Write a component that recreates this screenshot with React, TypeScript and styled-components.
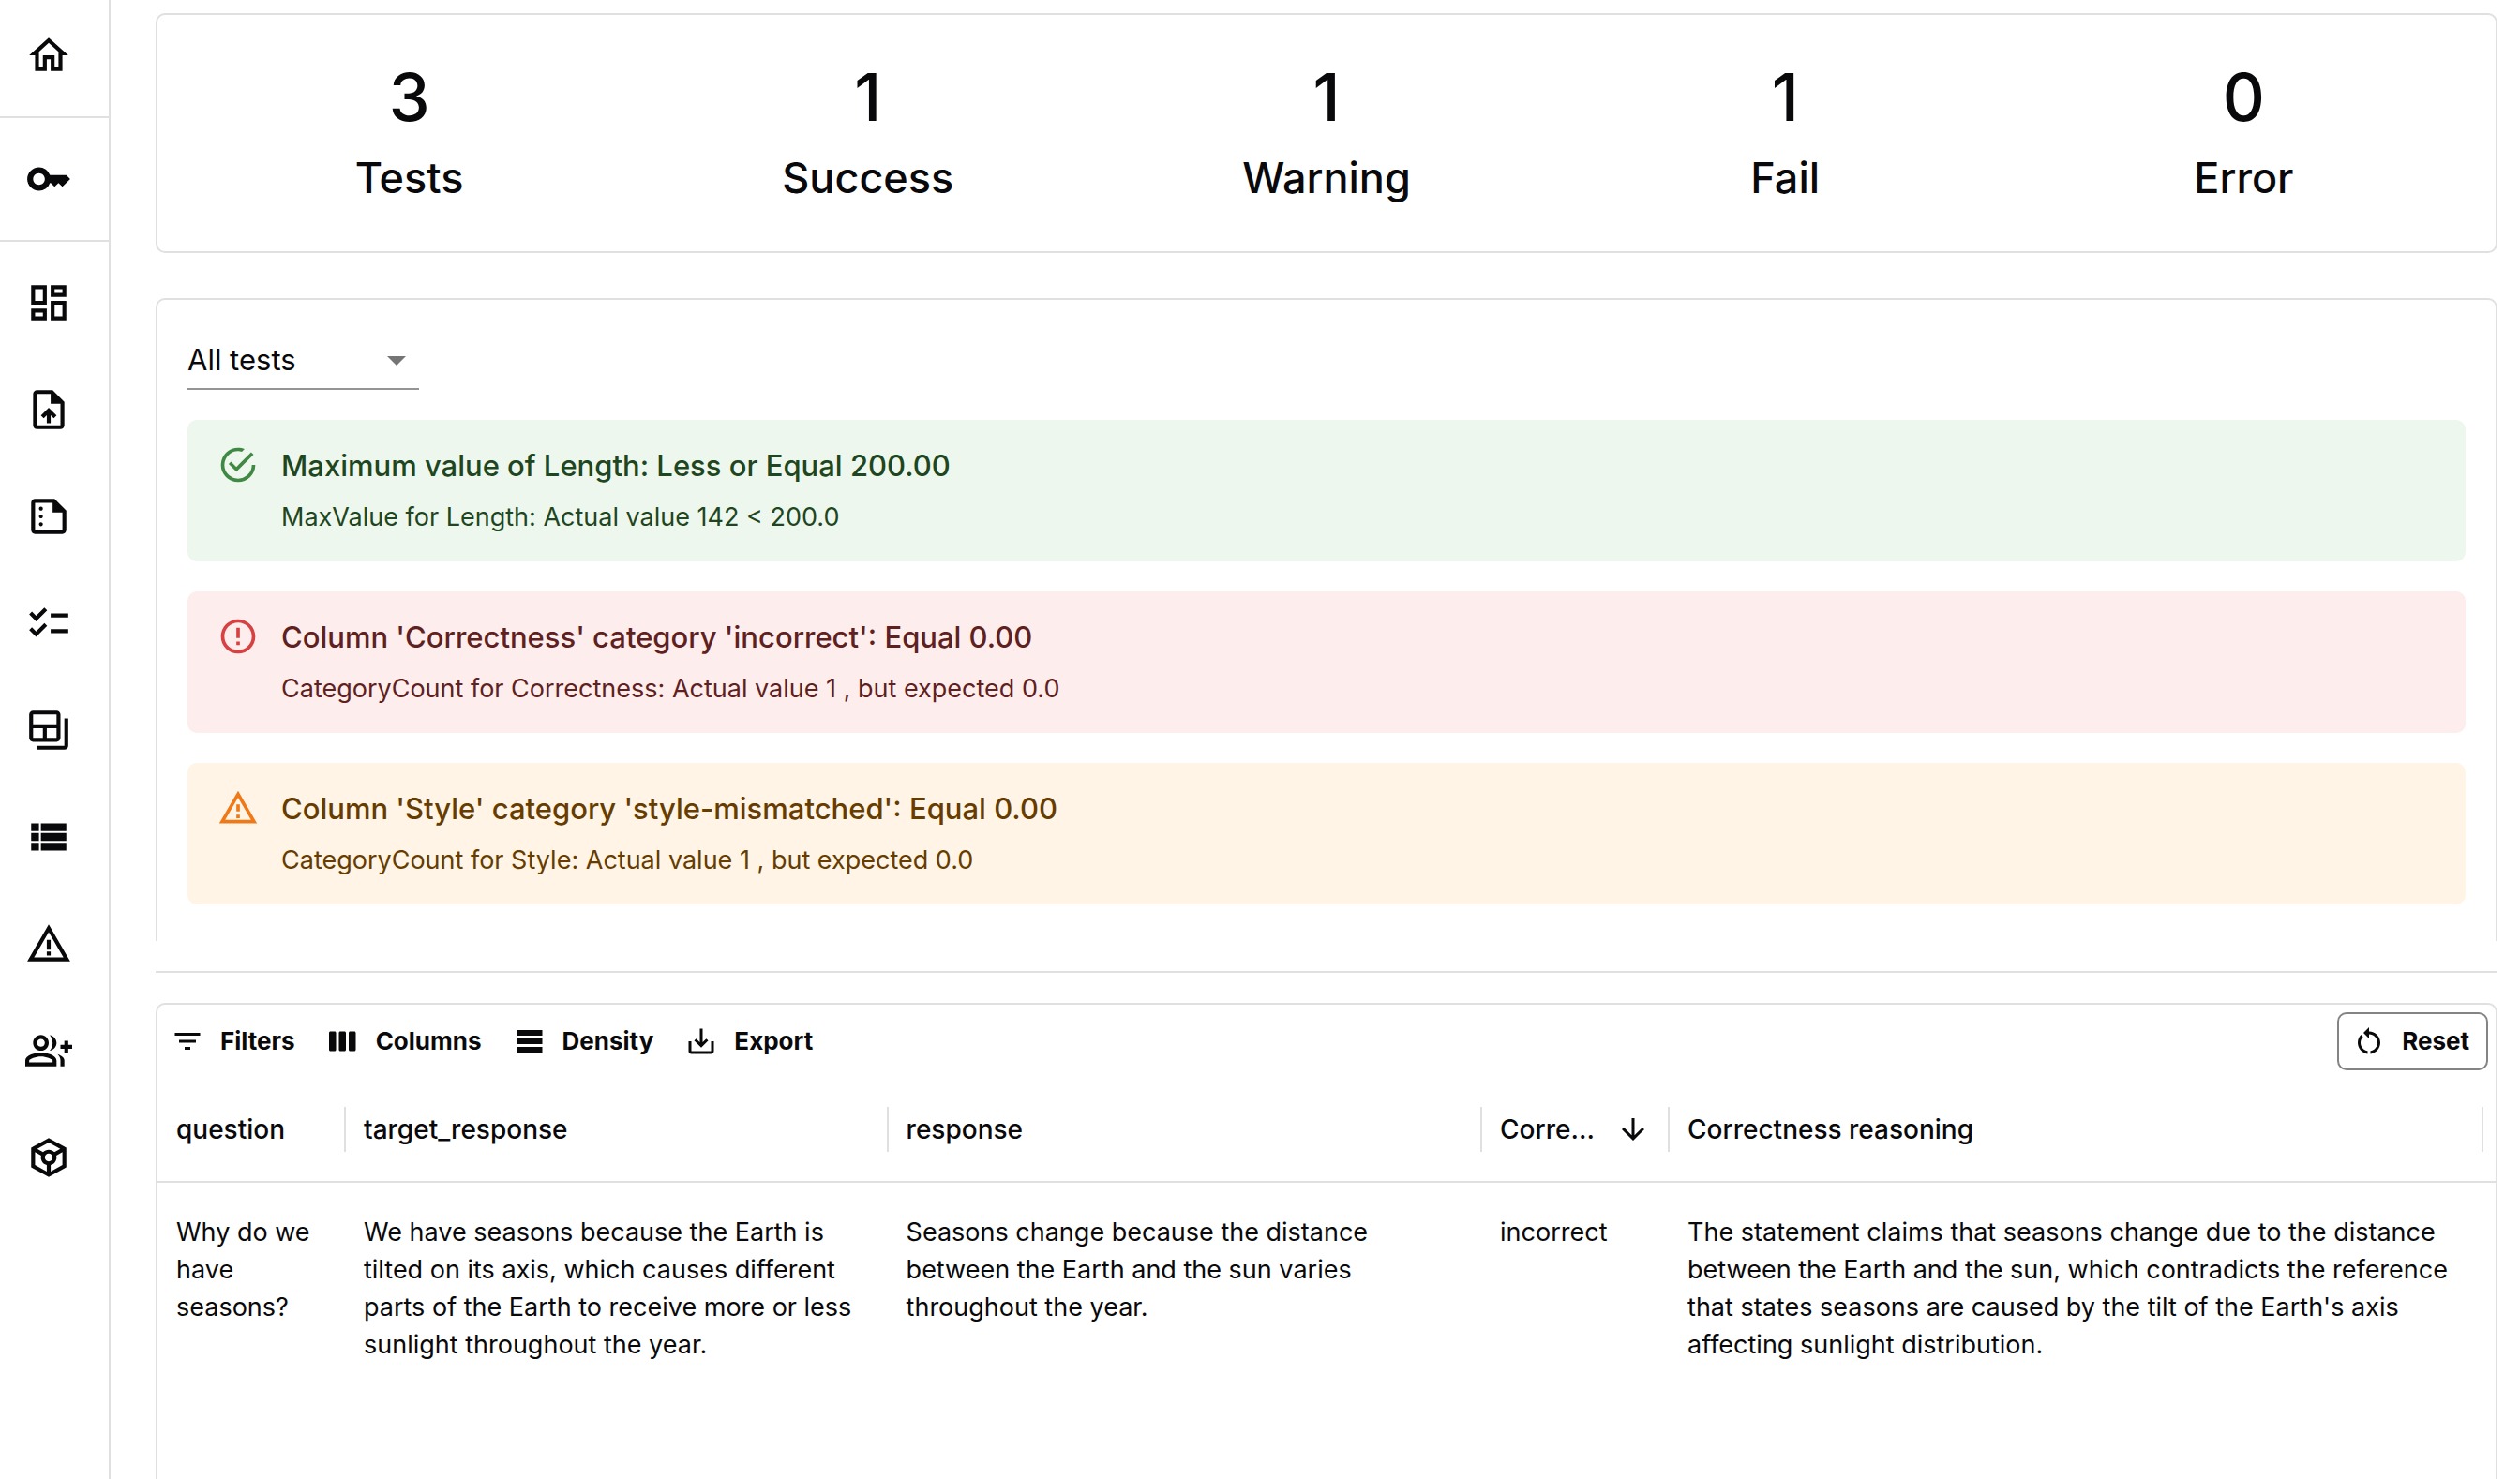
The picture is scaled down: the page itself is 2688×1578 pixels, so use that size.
import React from "react";
import styled, { createGlobalStyle } from "styled-components";
import {
  MdChecklist,
  MdKey,
  MdOutlineBackupTable,
  MdOutlineDashboard,
  MdOutlineGroupAdd,
  MdOutlineHome,
  MdOutlineSummarize,
  MdOutlineToken,
  MdOutlineUploadFile,
  MdViewList,
  MdWarningAmber,
} from "react-icons/md";

const ink = "#09090b";
const line = "#e0e0e0";

const GlobalStyle = createGlobalStyle`
  *, *::before, *::after { box-sizing: border-box; }
  body {
    margin: 0;
    background: #ffffff;
    color: ${ink};
    font-family: Inter, "Liberation Sans", sans-serif;
    font-size: 27px;
    line-height: 40px;
  }
`;

const Page = styled.div`
  display: flex;
  height: 100vh;
  overflow: hidden;
`;

/* Sidebar */

const Sidebar = styled.nav`
  flex: 0 0 118px;
  border-right: 2px solid ${line};
  padding-top: 2px;
`;

const NavGroup = styled.div`
  padding-bottom: 8px;

  & + & {
    padding-top: 8px;
    border-top: 2px solid ${line};
  }
`;

const NavLink = styled.a`
  display: block;
  padding: 32px 27px;
  color: ${ink};

  svg {
    display: block;
    width: 50px;
    height: 50px;
  }
`;

/* Main column */

const Main = styled.main`
  flex: 1;
  min-width: 0;
  display: flex;
  flex-direction: column;
  padding: 14px 24px 0 48px;
`;

const SummaryCard = styled.section`
  display: grid;
  grid-template-columns: repeat(5, 1fr);
  margin-bottom: 48px;
  padding: 45px 24px 51px;
  border: 2px solid ${line};
  border-radius: 10px;
`;

const Stat = styled.div`
  display: flex;
  flex-direction: column;
  gap: 16px;
  text-align: center;
  font-weight: 500;
`;

const StatValue = styled.div`
  font-size: 70px;
  line-height: 86px;
`;

const StatLabel = styled.div`
  font-size: 45px;
  line-height: 54px;
`;

const TestsCard = styled.section`
  display: flex;
  flex-direction: column;
  align-items: flex-start;
  gap: 32px;
  padding: 32px 32px 39px;
  border: 2px solid ${line};
  border-bottom: 0;
  border-radius: 10px 10px 0 0;
`;

const SelectBox = styled.div`
  position: relative;
  width: 247px;

  svg {
    position: absolute;
    right: 0;
    top: 8px;
    width: 48px;
    height: 48px;
    color: #757575;
    pointer-events: none;
  }
`;

const Select = styled.select`
  display: block;
  appearance: none;
  width: 100%;
  height: 64px;
  padding: 2px 48px 0 0;
  border: 0;
  border-bottom: 2px solid #949494;
  border-radius: 0;
  background: transparent;
  color: ${ink};
  font: inherit;
  font-size: 31px;
`;

type Tone = "success" | "error" | "warning";

const tones: Record<Tone, { fill: string; text: string; icon: string }> = {
  success: { fill: "#edf7ed", text: "#1e4620", icon: "#2e7d32" },
  error: { fill: "#fdeded", text: "#5f2120", icon: "#d32f2f" },
  warning: { fill: "#fff4e5", text: "#663c00", icon: "#ed6c02" },
};

const Alert = styled.article<{ $tone: Tone }>`
  display: flex;
  gap: 24px;
  width: 100%;
  padding: 25px 32px 27px;
  border-radius: 10px;
  background: ${(p) => tones[p.$tone].fill};
  color: ${(p) => tones[p.$tone].text};

  svg {
    flex: none;
    width: 44px;
    height: 44px;
    margin-top: 1px;
    color: ${(p) => tones[p.$tone].icon};
    opacity: 0.9;
  }
`;

const AlertTitle = styled.h2`
  margin: 0 0 11px;
  font-size: 31px;
  line-height: 48px;
  font-weight: 500;
`;

const AlertText = styled.p`
  margin: 0;
`;

const Divider = styled.hr`
  width: 100%;
  margin: 32px 0;
  border: 0;
  border-top: 2px solid ${line};
`;

/* Data grid */

const GridCard = styled.section`
  flex: 1;
  border: 2px solid ${line};
  border-bottom: 0;
  border-radius: 10px 10px 0 0;
`;

const Toolbar = styled.div`
  display: flex;
  align-items: center;
  gap: 17px;
  padding: 8px;
`;

const ToolButton = styled.button<{ $outlined?: boolean }>`
  display: flex;
  align-items: center;
  gap: 17px;
  height: 62px;
  margin-left: ${(p) => (p.$outlined ? "auto" : "0")};
  padding: ${(p) => (p.$outlined ? "0 18px 0 14px" : "0 10px 0 6px")};
  border: ${(p) => (p.$outlined ? "2px solid #848485" : "0")};
  border-radius: 10px;
  background: transparent;
  color: ${ink};
  font: inherit;
  font-size: 26px;
  font-weight: 700;

  svg {
    width: 36px;
    height: 36px;
  }
`;

const Table = styled.table`
  width: 100%;
  table-layout: fixed;
  border-collapse: separate;
  border-spacing: 0;
`;

const Col = styled.col<{ $width?: string }>`
  width: ${(p) => p.$width ?? "auto"};
`;

const HeadCell = styled.th`
  height: 112px;
  padding: 0;
  border-bottom: 2px solid ${line};
  font-size: 28px;
  font-weight: 500;
  text-align: left;

  &:last-child {
    padding-right: 14px;
  }
`;

/* The separator straddles the boundary between two columns. */
const HeadContent = styled.div`
  display: flex;
  align-items: center;
  justify-content: space-between;
  height: 48px;
  margin-right: -1px;
  padding: 0 19px 0 20px;
  border-right: 2px solid ${line};
  white-space: nowrap;

  svg {
    flex: none;
    width: 36px;
    height: 36px;
  }
`;

const Cell = styled.td`
  padding: 33px 20px;
  vertical-align: top;

  &:last-child {
    padding-right: 34px;
  }
`;

const Icon = ({ d }: { d: string }) => (
  <svg viewBox="0 0 24 24" fill="currentColor" aria-hidden="true">
    <path d={d} />
  </svg>
);

const paths = {
  caret: "M7 10l5 5 5-5z",
  success:
    "M20,12A8,8 0 0,1 12,20A8,8 0 0,1 4,12A8,8 0 0,1 12,4C12.76,4 13.5,4.11 14.2,4.31L15.77,2.74C14.61,2.26 13.34,2 12,2A10,10 0 0,0 2,12A10,10 0 0,0 12,22A10,10 0 0,0 22,12M7.91,10.08L6.5,11.5L11,16L21,6L19.59,4.58L11,13.17L7.91,10.08Z",
  error:
    "M11 15h2v2h-2zm0-8h2v6h-2zm.99-5C6.47 2 2 6.48 2 12s4.47 10 9.99 10C17.52 22 22 17.52 22 12S17.52 2 11.99 2zM12 20c-4.42 0-8-3.58-8-8s3.58-8 8-8 8 3.58 8 8-3.58 8-8 8z",
  warning:
    "M12 5.99L19.53 19H4.47L12 5.99M12 2L1 21h22L12 2zm1 14h-2v2h2v-2zm0-6h-2v4h2v-4z",
  filter: "M10 18h4v-2h-4v2zM3 6v2h18V6H3zm3 7h12v-2H6v2z",
  columns:
    "M6 5H3c-.55 0-1 .45-1 1v12c0 .55.45 1 1 1h3c.55 0 1-.45 1-1V6c0-.55-.45-1-1-1zm14 0h-3c-.55 0-1 .45-1 1v12c0 .55.45 1 1 1h3c.55 0 1-.45 1-1V6c0-.55-.45-1-1-1zm-7 0h-3c-.55 0-1 .45-1 1v12c0 .55.45 1 1 1h3c.55 0 1-.45 1-1V6c0-.55-.45-1-1-1z",
  density: "M21,8H3V4h18V8z M21,10H3v4h18V10z M21,16H3v4h18V16z",
  download:
    "M19 12v7H5v-7H3v7c0 1.1.9 2 2 2h14c1.1 0 2-.9 2-2v-7h-2zm-6 .67l2.59-2.58L17 11.5l-5 5-5-5 1.41-1.41L11 12.67V3h2z",
  reset:
    "M12 5V2L8 6l4 4V7c3.31 0 6 2.69 6 6 0 2.97-2.17 5.43-5 5.91v2.02c3.95-.49 7-3.85 7-7.93 0-4.42-3.58-8-8-8zm-6 8c0-1.65.67-3.15 1.76-4.24L6.34 7.34C4.9 8.79 4 10.79 4 13c0 4.08 3.05 7.44 7 7.93v-2.02c-2.83-.48-5-2.94-5-5.91z",
  arrowDown:
    "M20 12l-1.41-1.41L13 16.17V4h-2v12.17l-5.58-5.59L4 12l8 8 8-8z",
};

const navGroups = [
  [{ label: "Home", Glyph: MdOutlineHome }],
  [{ label: "Secrets", Glyph: MdKey }],
  [
    { label: "Dashboard", Glyph: MdOutlineDashboard },
    { label: "Upload", Glyph: MdOutlineUploadFile },
    { label: "Reports", Glyph: MdOutlineSummarize },
    { label: "Test suites", Glyph: MdChecklist },
    { label: "Datasets", Glyph: MdOutlineBackupTable },
    { label: "Traces", Glyph: MdViewList },
    { label: "Alerts", Glyph: MdWarningAmber },
    { label: "Members", Glyph: MdOutlineGroupAdd },
    { label: "Models", Glyph: MdOutlineToken },
  ],
];

const stats = [
  { value: 3, label: "Tests" },
  { value: 1, label: "Success" },
  { value: 1, label: "Warning" },
  { value: 1, label: "Fail" },
  { value: 0, label: "Error" },
];

const alerts: { tone: Tone; title: string; text: string }[] = [
  {
    tone: "success",
    title: "Maximum value of Length: Less or Equal 200.00",
    text: "MaxValue for Length: Actual value 142 < 200.0",
  },
  {
    tone: "error",
    title: "Column 'Correctness' category 'incorrect': Equal 0.00",
    text: "CategoryCount for Correctness: Actual value 1 , but expected 0.0",
  },
  {
    tone: "warning",
    title: "Column 'Style' category 'style-mismatched': Equal 0.00",
    text: "CategoryCount for Style: Actual value 1 , but expected 0.0",
  },
];

const tools = [
  { label: "Filters", icon: paths.filter },
  { label: "Columns", icon: paths.columns },
  { label: "Density", icon: paths.density },
  { label: "Export", icon: paths.download },
];

const columns = [
  { name: "question", width: "200px" },
  { name: "target_response", width: "23.2%" },
  { name: "response", width: "25.4%" },
  { name: "Corre...", width: "200px", sorted: true },
  { name: "Correctness reasoning" },
];

const rows = [
  [
    "Why do we have seasons?",
    "We have seasons because the Earth is tilted on its axis, which causes different parts of the Earth to receive more or less sunlight throughout the year.",
    "Seasons change because the distance between the Earth and the sun varies throughout the year.",
    "incorrect",
    "The statement claims that seasons change due to the distance between the Earth and the sun, which contradicts the reference that states seasons are caused by the tilt of the Earth's axis affecting sunlight distribution.",
  ],
];

export default function App() {
  return (
    <>
      <GlobalStyle />
      <Page>
        <Sidebar aria-label="Project">
          {navGroups.map((group, i) => (
            <NavGroup key={i}>
              {group.map(({ label, Glyph }) => (
                <NavLink key={label} href="#" aria-label={label}>
                  <Glyph aria-hidden="true" />
                </NavLink>
              ))}
            </NavGroup>
          ))}
        </Sidebar>
        <Main>
          <SummaryCard>
            {stats.map((s) => (
              <Stat key={s.label}>
                <StatValue>{s.value}</StatValue>
                <StatLabel>{s.label}</StatLabel>
              </Stat>
            ))}
          </SummaryCard>
          <TestsCard>
            <SelectBox>
              <Select aria-label="Test status" defaultValue="all">
                <option value="all">All tests</option>
              </Select>
              <Icon d={paths.caret} />
            </SelectBox>
            {alerts.map((a) => (
              <Alert key={a.title} $tone={a.tone}>
                <Icon d={paths[a.tone]} />
                <div>
                  <AlertTitle>{a.title}</AlertTitle>
                  <AlertText>{a.text}</AlertText>
                </div>
              </Alert>
            ))}
          </TestsCard>
          <Divider />
          <GridCard>
            <Toolbar>
              {tools.map((t) => (
                <ToolButton key={t.label} type="button">
                  <Icon d={t.icon} />
                  {t.label}
                </ToolButton>
              ))}
              <ToolButton type="button" $outlined>
                <Icon d={paths.reset} />
                Reset
              </ToolButton>
            </Toolbar>
            <Table>
              <colgroup>
                {columns.map((c) => (
                  <Col key={c.name} $width={c.width} />
                ))}
              </colgroup>
              <thead>
                <tr>
                  {columns.map((c) => (
                    <HeadCell key={c.name} scope="col">
                      <HeadContent>
                        {c.name}
                        {c.sorted && <Icon d={paths.arrowDown} />}
                      </HeadContent>
                    </HeadCell>
                  ))}
                </tr>
              </thead>
              <tbody>
                {rows.map((row) => (
                  <tr key={row[0]}>
                    {row.map((value, i) => (
                      <Cell key={columns[i].name}>{value}</Cell>
                    ))}
                  </tr>
                ))}
              </tbody>
            </Table>
          </GridCard>
        </Main>
      </Page>
    </>
  );
}
